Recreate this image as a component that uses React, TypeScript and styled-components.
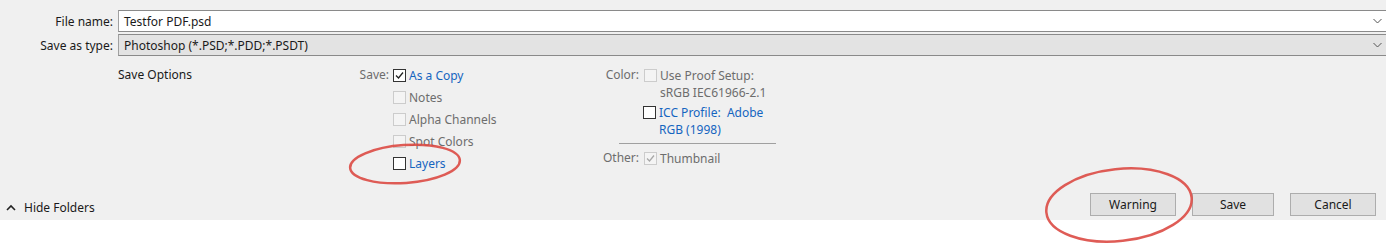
import styled, { createGlobalStyle } from "styled-components";

const Global = createGlobalStyle`
  body {
    margin: 0;
    background: #ffffff;
    font-family: "Segoe UI", "Noto Sans", sans-serif;
    font-size: 12px;
    color: #1a1a1a;
  }
`;

export default function App() {
  return (
    <>
      <Global />
      <Dialog>
        <Fields>
          <FieldRow>
            <FieldLabel>File name:</FieldLabel>
            <Combo>
              <ComboText>Testfor PDF.psd</ComboText>
              <Chevron />
            </Combo>
          </FieldRow>
          <FieldRow>
            <FieldLabel>Save as type:</FieldLabel>
            <Combo $readonly>
              <ComboText>Photoshop (*.PSD;*.PDD;*.PSDT)</ComboText>
              <Chevron />
            </Combo>
          </FieldRow>
        </Fields>

        <Options>
          <Title>Save Options</Title>

          <Group>
            <GroupLabel>Save:</GroupLabel>
            <OptionList>
              <Option>
                <Box checked />
                <OptText $link>As a Copy</OptText>
              </Option>
              <Option>
                <Box disabled />
                <OptText $dim>Notes</OptText>
              </Option>
              <Option>
                <Box disabled />
                <OptText $dim>Alpha Channels</OptText>
              </Option>
              <Option>
                <Box disabled />
                <OptText $dim>Spot Colors</OptText>
              </Option>
              <Option>
                <Box />
                <OptText $link>Layers</OptText>
              </Option>
            </OptionList>
          </Group>

          <ColorGroup>
            <GroupLabel>Color:</GroupLabel>
            <OptionList>
              <WrapOption>
                <Box disabled />
                <OptText $dim>
                  Use Proof Setup:
                  <br />
                  sRGB IEC61966-2.1
                </OptText>
              </WrapOption>
              <WrapOption $shift>
                <Box />
                <OptText $link>
                  ICC Profile:&nbsp; Adobe
                  <br />
                  RGB (1998)
                </OptText>
              </WrapOption>
            </OptionList>
            <Divider />
            <GroupLabel>Other:</GroupLabel>
            <OptionList>
              <Option>
                <Box disabled checked />
                <OptText $dim>Thumbnail</OptText>
              </Option>
            </OptionList>
          </ColorGroup>
        </Options>

        <Footer>
          <ToggleFolders>
            <svg width="10" height="7" viewBox="0 0 10 7">
              <polyline points="1,6 5,2 9,6" fill="none" stroke="#222" strokeWidth="1.6" />
            </svg>
            Hide Folders
          </ToggleFolders>
          <Buttons>
            <Button $w={86}>Warning</Button>
            <Button $w={82}>Save</Button>
            <Button $w={86}>Cancel</Button>
          </Buttons>
        </Footer>

        <Marks width="1386" height="245" viewBox="0 0 1386 245">
          <ellipse cx="405" cy="164" rx="55" ry="19" transform="rotate(-4 405 164)" />
          <ellipse cx="1119" cy="205" rx="73" ry="36" transform="rotate(-6 1119 205)" />
        </Marks>
      </Dialog>
      <Blank />
    </>
  );
}

function Chevron() {
  return (
    <ChevronIcon width="9" height="6" viewBox="0 0 9 6">
      <polyline points="0.5,1 4.5,5 8.5,1" fill="none" stroke="#555" strokeWidth="1" />
    </ChevronIcon>
  );
}

function Box({ checked, disabled }: { checked?: boolean; disabled?: boolean }) {
  return (
    <Check $disabled={disabled}>
      {checked && (
        <svg width="11" height="11" viewBox="0 0 11 11">
          <polyline
            points="2,5.5 4.5,8 9,2.5"
            fill="none"
            stroke={disabled ? "#a8a8a8" : "#222"}
            strokeWidth="1.3"
          />
        </svg>
      )}
    </Check>
  );
}

const Dialog = styled.div`
  position: relative;
  height: 220px;
  background: #f0f0f0;
  display: flex;
  flex-direction: column;
`;

const Blank = styled.div`
  height: 25px;
  background: #fff;
`;

const Fields = styled.div`
  padding-top: 10px;
  display: flex;
  flex-direction: column;
  gap: 2px;
`;

const FieldRow = styled.div`
  display: grid;
  grid-template-columns: 113px 1fr;
  column-gap: 5px;
  align-items: center;
`;

const FieldLabel = styled.div`
  text-align: right;
  white-space: nowrap;
`;

const Combo = styled.div<{ $readonly?: boolean }>`
  height: 22px;
  box-sizing: border-box;
  border-top: 1px solid #8a8a8a;
  border-bottom: 1px solid #8a8a8a;
  border-left: 1px solid #a0a0a0;
  background: ${(p) => (p.$readonly ? "#e3e3e3" : "#ffffff")};
  display: flex;
  align-items: center;
  padding: 0 4px 0 5px;
`;

const ComboText = styled.span`
  flex: 1;
`;

const ChevronIcon = styled.svg`
  flex: none;
`;

const Options = styled.div`
  display: flex;
  padding: 8px 0 0 118px;
`;

const Title = styled.div`
  width: 222px;
  line-height: 22px;
`;

const Group = styled.div`
  display: grid;
  grid-template-columns: 49px auto;
  column-gap: 4px;
  align-items: start;
  width: 250px;
`;

const ColorGroup = styled(Group)`
  column-gap: 5px;
  width: 186px;
`;

const GroupLabel = styled.div`
  text-align: right;
  line-height: 22px;
  color: #6d6d6d;
`;

const OptionList = styled.div`
  display: flex;
  flex-direction: column;
`;

const Option = styled.div`
  display: flex;
  align-items: center;
  gap: 3px;
  height: 22px;
`;

const WrapOption = styled.div<{ $shift?: boolean }>`
  display: flex;
  align-items: flex-start;
  gap: 3px;
  padding-top: 3px;
  margin-left: ${(p) => (p.$shift ? "-1px" : "0")};
  line-height: 17px;

  & > span:first-child {
    margin-top: 2px;
  }
`;

const OptText = styled.div<{ $link?: boolean; $dim?: boolean }>`
  white-space: nowrap;
  color: ${(p) => (p.$link ? "#1565c0" : p.$dim ? "#6d6d6d" : "#1a1a1a")};
`;

const Check = styled.span<{ $disabled?: boolean }>`
  flex: none;
  width: 13px;
  height: 13px;
  box-sizing: border-box;
  border: 1px solid ${(p) => (p.$disabled ? "#cccccc" : "#333333")};
  background: ${(p) => (p.$disabled ? "#f4f4f4" : "#ffffff")};
  display: flex;
  align-items: center;
  justify-content: center;
`;

const Divider = styled.div`
  grid-column: 1 / -1;
  margin: 0 0 -2px 29px;
  height: 1px;
  background: #a0a0a0;
`;

const Footer = styled.div`
  margin-top: auto;
  height: 28px;
  padding-bottom: 2px;
  display: flex;
  align-items: center;
  justify-content: space-between;
`;

const ToggleFolders = styled.div`
  display: flex;
  align-items: center;
  gap: 8px;
  padding-left: 6px;
  margin-top: 6px;
`;

const Buttons = styled.div`
  display: flex;
  gap: 16px;
  padding-right: 10px;
`;

const Button = styled.button<{ $w: number }>`
  width: ${(p) => p.$w}px;
  height: 23px;
  font: inherit;
  color: #1a1a1a;
  background: #e1e1e1;
  border: 1px solid #adadad;
  padding: 0;
`;

const Marks = styled.svg`
  position: absolute;
  left: 0;
  top: 0;
  pointer-events: none;

  ellipse {
    fill: none;
    stroke: #dc4a44;
    stroke-width: 2.5;
    opacity: 0.9;
  }
`;
